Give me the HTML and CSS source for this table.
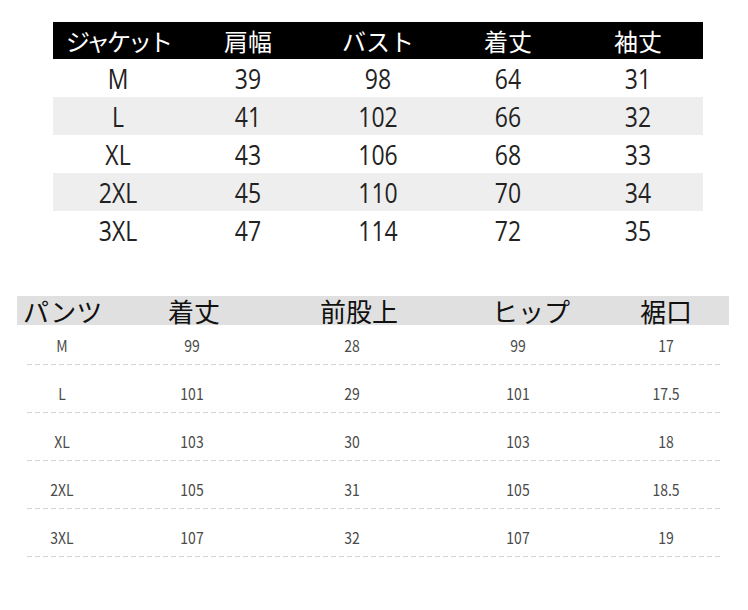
FILE: index.html
```html
<!DOCTYPE html>
<html lang="ja">
<head>
<meta charset="utf-8">
<link rel="stylesheet" href="styles.css">
</head>
<body>
<section class="jacket">
  <div class="jrow jhead"><span class="tight">ジャケット</span><span>肩幅</span><span>バスト</span><span>着丈</span><span>袖丈</span></div>
  <div class="jrow"><span>M</span><span>39</span><span>98</span><span>64</span><span>31</span></div>
  <div class="jrow alt"><span>L</span><span>41</span><span>102</span><span>66</span><span>32</span></div>
  <div class="jrow"><span>XL</span><span>43</span><span>106</span><span>68</span><span>33</span></div>
  <div class="jrow alt"><span>2XL</span><span>45</span><span>110</span><span>70</span><span>34</span></div>
  <div class="jrow"><span>3XL</span><span>47</span><span>114</span><span>72</span><span>35</span></div>
</section>
<section class="pants">
  <div class="phead"><span>パンツ</span><span>着丈</span><span>前股上</span><span>ヒップ</span><span>裾口</span></div>
  <div class="prows">
    <div class="prow"><span>M</span><span>99</span><span>28</span><span>99</span><span>17</span></div>
    <div class="prow"><span>L</span><span>101</span><span>29</span><span>101</span><span>17.5</span></div>
    <div class="prow"><span>XL</span><span>103</span><span>30</span><span>103</span><span>18</span></div>
    <div class="prow"><span>2XL</span><span>105</span><span>31</span><span>105</span><span>18.5</span></div>
    <div class="prow"><span>3XL</span><span>107</span><span>32</span><span>107</span><span>19</span></div>
  </div>
</section>
</body>
</html>
```
FILE: styles.css
```css
html, body {
  margin: 0;
  padding: 0;
  background: #fff;
}

.jacket {
  margin: 22px 0 0 53px;
  width: 650px;
  font-family: "Open Sans", "Noto Sans CJK JP", sans-serif;
}

.jrow {
  display: grid;
  grid-template-columns: repeat(5, 1fr);
  align-items: center;
  text-align: center;
  height: 38px;
  font-size: 23px;
  line-height: 30px;
  color: #222;
}

.jrow > span {
  display: block;
  transform: scaleY(1.2);
}

.jrow.alt {
  background: #eeeeee;
}

.jhead {
  height: 37px;
  background: #000;
  color: #fff;
  font-family: "Noto Sans CJK JP", sans-serif;
  font-size: 24px;
}

.jhead > span {
  transform: none;
}

.tight {
  letter-spacing: -3px;
}

.pants {
  margin: 47px 0 0 17px;
  width: 712px;
}

.phead {
  display: grid;
  grid-template-columns: 145px 152px 172px 148px 1fr;
  box-sizing: border-box;
  padding-left: 6px;
  height: 29px;
  background: #e0e0e0;
  font-family: "Noto Sans CJK JP", sans-serif;
  font-size: 26px;
  line-height: 29px;
  color: #111;
}

.prows {
  margin: 0 7px 0 10px;
}

.prow {
  display: grid;
  grid-template-columns: 70px 190px 130px 202px 94px;
  align-items: end;
  text-align: center;
  box-sizing: border-box;
  height: 48px;
  padding-bottom: 12px;
  font-family: "Noto Sans CJK JP", sans-serif;
  font-size: 14px;
  line-height: 16px;
  color: #4a4a4a;
  background: linear-gradient(to right, #d4d4d4 5px, transparent 5px) left bottom / 8px 1px repeat-x;
}

.prow > span {
  display: block;
  transform: scaleY(1.15);
}

.prow:first-child {
  height: 40px;
}
```
